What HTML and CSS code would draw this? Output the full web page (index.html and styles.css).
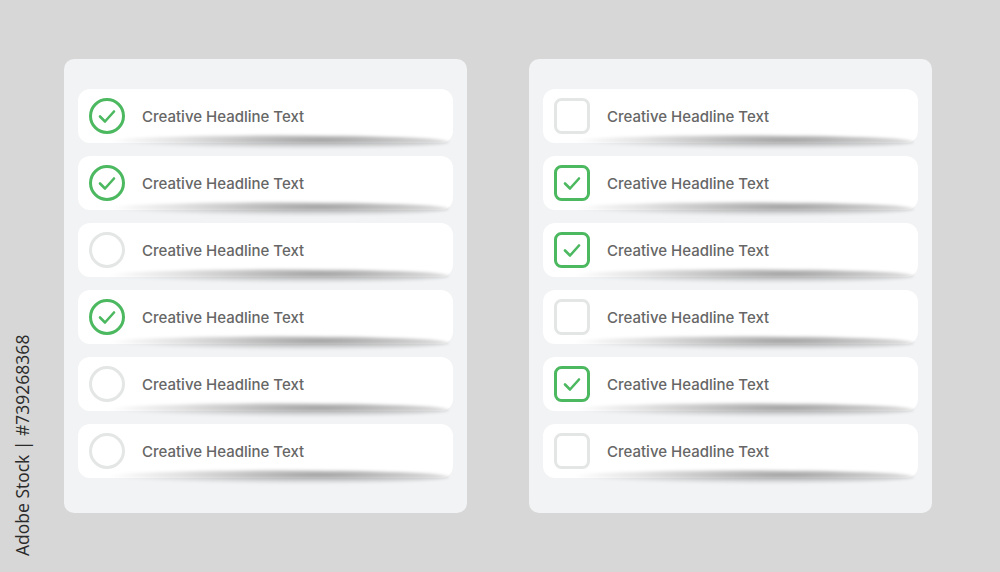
FILE: index.html
```html
<!DOCTYPE html>
<html lang="en">
  <head>
    <meta charset="UTF-8" />
    <meta name="viewport" content="width=device-width, initial-scale=1.0" />
    <title>Checklist</title>
    <link rel="stylesheet" href="styles.css">
  </head>
  <body>
    <div class="boards">
      <!-- round checks -->
      <div class="card">
        <div class="row">
          <svg class="mark" viewBox="0 0 36 36"><circle class="ring on" cx="18" cy="18" r="16.5"/><path class="tick" d="M11 18.5 L16 23.5 L25 13.5"/></svg>
          <span class="label">Creative Headline Text</span>
        </div>
        <div class="row">
          <svg class="mark" viewBox="0 0 36 36"><circle class="ring on" cx="18" cy="18" r="16.5"/><path class="tick" d="M11 18.5 L16 23.5 L25 13.5"/></svg>
          <span class="label">Creative Headline Text</span>
        </div>
        <div class="row">
          <svg class="mark" viewBox="0 0 36 36"><circle class="ring" cx="18" cy="18" r="16.5"/></svg>
          <span class="label">Creative Headline Text</span>
        </div>
        <div class="row">
          <svg class="mark" viewBox="0 0 36 36"><circle class="ring on" cx="18" cy="18" r="16.5"/><path class="tick" d="M11 18.5 L16 23.5 L25 13.5"/></svg>
          <span class="label">Creative Headline Text</span>
        </div>
        <div class="row">
          <svg class="mark" viewBox="0 0 36 36"><circle class="ring" cx="18" cy="18" r="16.5"/></svg>
          <span class="label">Creative Headline Text</span>
        </div>
        <div class="row">
          <svg class="mark" viewBox="0 0 36 36"><circle class="ring" cx="18" cy="18" r="16.5"/></svg>
          <span class="label">Creative Headline Text</span>
        </div>
      </div>

      <!-- square checks -->
      <div class="card">
        <div class="row">
          <svg class="mark" viewBox="0 0 36 36"><rect class="ring" x="1.5" y="1.5" width="33" height="33" rx="6"/></svg>
          <span class="label">Creative Headline Text</span>
        </div>
        <div class="row">
          <svg class="mark" viewBox="0 0 36 36"><rect class="ring on" x="1.5" y="1.5" width="33" height="33" rx="6"/><path class="tick" d="M11 18.5 L16 23.5 L25 13.5"/></svg>
          <span class="label">Creative Headline Text</span>
        </div>
        <div class="row">
          <svg class="mark" viewBox="0 0 36 36"><rect class="ring on" x="1.5" y="1.5" width="33" height="33" rx="6"/><path class="tick" d="M11 18.5 L16 23.5 L25 13.5"/></svg>
          <span class="label">Creative Headline Text</span>
        </div>
        <div class="row">
          <svg class="mark" viewBox="0 0 36 36"><rect class="ring" x="1.5" y="1.5" width="33" height="33" rx="6"/></svg>
          <span class="label">Creative Headline Text</span>
        </div>
        <div class="row">
          <svg class="mark" viewBox="0 0 36 36"><rect class="ring on" x="1.5" y="1.5" width="33" height="33" rx="6"/><path class="tick" d="M11 18.5 L16 23.5 L25 13.5"/></svg>
          <span class="label">Creative Headline Text</span>
        </div>
        <div class="row">
          <svg class="mark" viewBox="0 0 36 36"><rect class="ring" x="1.5" y="1.5" width="33" height="33" rx="6"/></svg>
          <span class="label">Creative Headline Text</span>
        </div>
      </div>
    </div>

    <div class="credit">Adobe Stock | #739268368</div>
  </body>
</html>
```

FILE: styles.css
```css
body {
  margin: 0;
  height: 572px;
  overflow: hidden;
  background-color: #d6d7d6;
  font-family: "Inter", "Lato", sans-serif;
}

.boards {
  display: flex;
  gap: 62px;
  padding: 59px 0 0 64px;
}

.card {
  box-sizing: border-box;
  width: 403px;
  height: 454px;
  padding: 30px 14px 0;
  background-color: #f2f3f4;
  border-radius: 10px;
  display: flex;
  flex-direction: column;
  gap: 13px;
}

.row {
  position: relative;
  z-index: 0;
  height: 54px;
  display: flex;
  align-items: center;
  gap: 17px;
  padding-left: 11px;
  background-color: #fff;
  border-radius: 12px;
}

/* lifted shadow under each row */
.row::after {
  content: "";
  position: absolute;
  z-index: -1;
  left: 8%;
  right: 1%;
  bottom: -6px;
  height: 14px;
  border-radius: 50%;
  background: radial-gradient(ellipse at 62% 35%, rgba(0, 0, 0, 0.38), rgba(0, 0, 0, 0.1) 50%, rgba(0, 0, 0, 0) 72%);
  filter: blur(1.5px);
}

.mark {
  width: 36px;
  height: 36px;
  flex: none;
}

.ring {
  fill: none;
  stroke: #e4e5e5;
  stroke-width: 3;
}

.ring.on {
  stroke: #4cb960;
}

.tick {
  fill: none;
  stroke: #4cb960;
  stroke-width: 2.6;
  stroke-linecap: round;
  stroke-linejoin: round;
}

.label {
  font-size: 15px;
  font-weight: 500;
  color: #666;
}

.credit {
  position: absolute;
  left: 13px;
  top: 556px;
  transform-origin: 0 0;
  transform: rotate(-90deg);
  white-space: nowrap;
  font-family: "Open Sans", sans-serif;
  font-size: 17.5px;
  font-weight: 500;
  color: #2a2a2a;
  line-height: 1.05;
}
```
